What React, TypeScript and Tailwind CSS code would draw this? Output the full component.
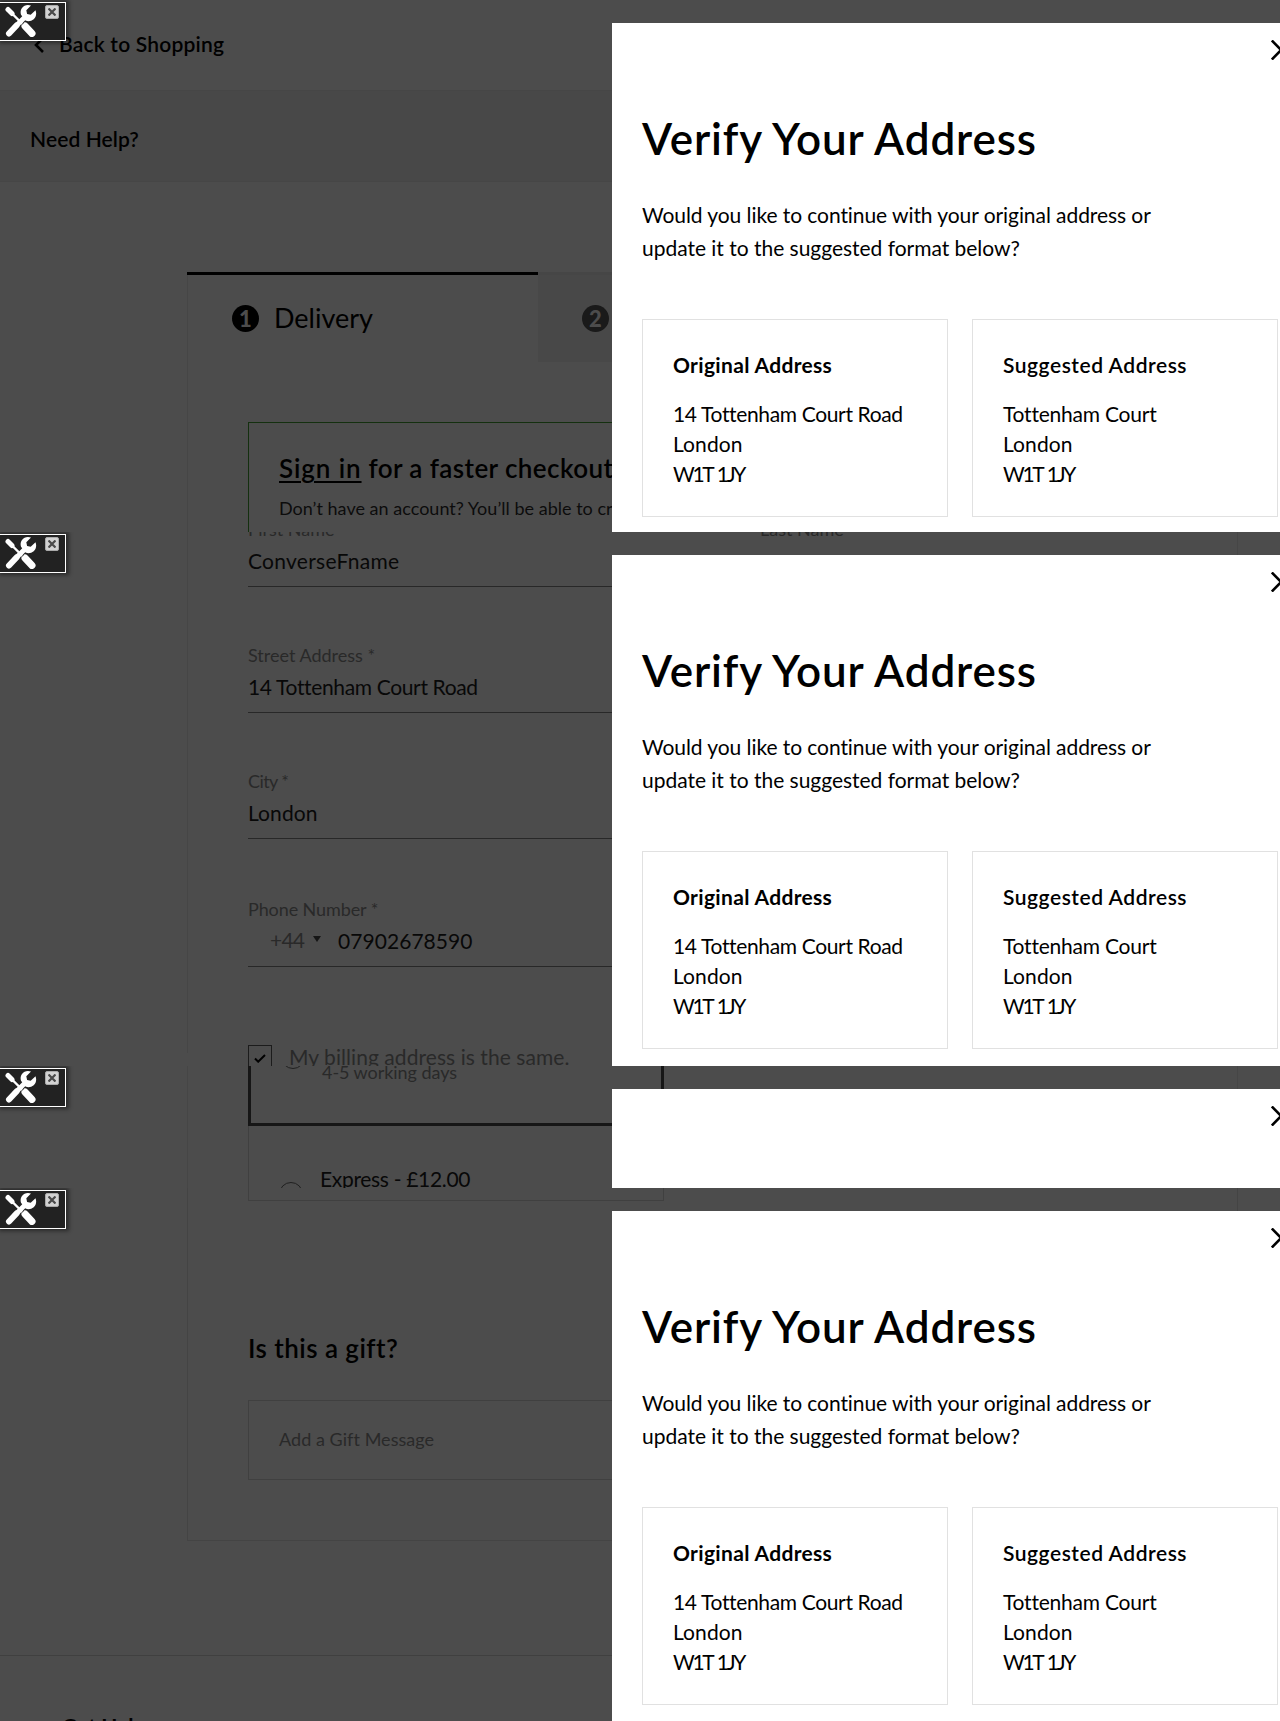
import type { ReactNode } from "react";

function ToolsIcon() {
  return (
    <svg viewBox="0 0 32 32" className="size-8" fill="none" stroke="#fff">
      <path d="M11.5 20.5 4 28.5" strokeWidth="6" strokeLinecap="round" />
      <path d="M19.5 12.5 9 23" strokeWidth="5" />
      <path
        d="M30.5 5.2l-4.8 4.6-3.6-.9-.8-3.6L26 .6C22.5-.6 18.9.3 17 3c-1.5 2.1-1.7 4.5-1 6.8L20.5 15.5c2.6 1.2 5.8.7 8.2-1.2 2.5-2.3 3.1-6 1.8-9.1z"
        fill="#fff"
        stroke="none"
      />
      <path d="M3 4.5l4 4" strokeWidth="5" strokeLinecap="round" />
      <path d="M7 8.5l11.5 11.5" strokeWidth="2.4" />
      <path d="M20 21l7 7.5" strokeWidth="7" strokeLinecap="round" />
      <path d="M16.5 19.8l2.6-2.4" stroke="#222" strokeWidth="1" />
    </svg>
  );
}

function ToolBadge() {
  return (
    <div className="absolute left-0 top-0.5 z-20 flex h-[39px] w-[66px] items-start border-y border-r border-white bg-[#222] pl-[5px] pt-[2px] shadow-[1px_0_4px_2px_rgba(0,0,0,0.45)]">
      <ToolsIcon />
      <div className="ml-2 flex size-[14px] items-center justify-center rounded-[2px] border border-[#aaa] bg-[#d2d2d2]">
        <svg viewBox="0 0 8 8" className="size-2" stroke="#4a4a4a" strokeWidth="2.2">
          <path d="M0.5 0.5l7 7M7.5 0.5l-7 7" />
        </svg>
      </div>
    </div>
  );
}

function AddressCard({ title, lines }: { title: ReactNode; lines: ReactNode }) {
  return (
    <div className="h-[198px] w-[306px] shrink-0 border border-[#e1e1e1] pl-[30px] pt-[33px]">
      <h3>{title}</h3>
      <div className="mt-[22px] leading-[30px]">{lines}</div>
    </div>
  );
}

function VerifyModal() {
  return (
    <div className="absolute bottom-0 right-0 top-[23px] z-10 w-[668px] overflow-hidden bg-white pl-[30px] text-[21px] leading-6 text-black">
      <svg
        viewBox="0 0 20 20"
        className="absolute -right-[11px] top-[17px] size-5"
        stroke="#000"
        strokeWidth="2.6"
      >
        <path d="M0.8 0.5l18.4 19M19.2 0.5l-18.4 19" />
      </svg>
      <h2 className="mt-[89px] text-[44px] font-semibold leading-[52px] tracking-[0.87px]">Verify Your Address</h2>
      <p className="mt-[34px] whitespace-nowrap leading-[33px]">
        <span className="tracking-[-0.07px]">Would you like to continue with your original address or</span>
        <br />
        <span className="tracking-[-0.02px]">update it to the suggested format below?</span>
      </p>
      <div className="mt-[55px] flex gap-6">
        <AddressCard
          title={<span className="font-bold tracking-[0.33px]">Original Address</span>}
          lines={
            <>
              <p className="tracking-[-0.35px]">14 Tottenham Court Road</p>
              <p className="tracking-[0.1px]">London</p>
              <p className="tracking-[-2.3px] [word-spacing:2px]">W1T 1JY</p>
            </>
          }
        />
        <AddressCard
          title={<span className="font-semibold tracking-[0.53px]">Suggested Address</span>}
          lines={
            <>
              <p className="tracking-[-0.22px]">Tottenham Court</p>
              <p className="tracking-[0.1px]">London</p>
              <p className="tracking-[-2.3px] [word-spacing:2px]">W1T 1JY</p>
            </>
          }
        />
      </div>
    </div>
  );
}

function Slice({ className, children }: { className: string; children: ReactNode }) {
  return (
    <section className={`relative overflow-hidden bg-[#4c4c4c] ${className}`}>
      <ToolBadge />
      {children}
      <VerifyModal />
    </section>
  );
}

function Field({ label, children }: { label: ReactNode; children: ReactNode }) {
  return (
    <div className="border-b border-[#282828] pb-[13px]">
      <div className="text-[18px] leading-5 text-[#292929]">{label}</div>
      <div className="mt-[10px] flex h-6 text-[#080808]">{children}</div>
    </div>
  );
}

function StepNumber({ className, children }: { className: string; children: ReactNode }) {
  return (
    <span
      className={`flex size-[27px] items-center justify-center rounded-full text-[22px] font-black leading-none text-[#4c4c4c] ${className}`}
    >
      {children}
    </span>
  );
}

function TopSlice() {
  return (
    <Slice className="h-[532px]">
      <header className="flex h-[91px] items-start border-b border-[#464646] pl-[34px] pt-8">
        <svg viewBox="0 0 10 16" className="mt-[5px] h-4 w-2.5" fill="none" stroke="#000" strokeWidth="2.6">
          <path d="M9 1 2 8l7 7" />
        </svg>
        <span className="ml-[15px] font-semibold tracking-[0.2px]">Back to Shopping</span>
      </header>
      <div className="h-[91px] border-b border-[#464646] bg-[#484848] pl-[30px] pt-9">
        <span className="font-semibold tracking-[0.1px]">Need Help?</span>
      </div>
      <main className="ml-[187px] mt-[90px] h-[260px] w-[1051px] border-x border-[#464646]">
        <div className="-ml-px flex">
          <div className="flex h-[90px] w-[351px] items-center gap-[15px] border-t-[3px] border-black pl-[45px]">
            <StepNumber className="bg-black">1</StepNumber>
            <span className="-mt-0.5 text-[27px] leading-8">Delivery</span>
          </div>
          <div className="flex h-[90px] flex-1 items-center border-t-[3px] border-[#464646] bg-[#484848] pl-11">
            <StepNumber className="bg-[#1a1a1a]">2</StepNumber>
          </div>
        </div>
        <div className="ml-[60px] mt-[60px] h-[140px] w-[928px] border border-[#14300f] pl-[30px] pt-[29px]">
          <h2 className="whitespace-nowrap text-[26px] font-semibold leading-8 tracking-[0.42px]">
            <span className="tracking-[0.9px] underline decoration-2 underline-offset-[3px]">Sign in</span> for a
            faster checkout
          </h2>
          <p className="mt-[14px] whitespace-nowrap text-[18px] leading-5 tracking-[0.02px] text-[#0c0c0c]">
            Don’t have an account? You’ll be able to create one
          </p>
        </div>
      </main>
    </Slice>
  );
}

function FormSlice() {
  return (
    <Slice className="h-[534px]">
      <div className="ml-[187px] h-[534px] w-[1051px] border-x border-[#464646] pl-[60px]">
        <div className="-mt-[13px] w-[928px]">
          <div className="grid grid-cols-2 gap-x-24">
            <Field label="First Name">
              <span className="tracking-[0.27px]">ConverseFname</span>
            </Field>
            <Field label="Last Name">
              <span className="text-[20px]">LNU</span>
            </Field>
          </div>
          <div className="mt-[58px]">
            <Field label="Street Address *">
              <span className="tracking-[-0.35px]">14 Tottenham Court Road</span>
            </Field>
          </div>
          <div className="mt-[58px]">
            <Field label={<span className="tracking-[-0.6px]">City *</span>}>
              <span className="tracking-[0.1px]">London</span>
            </Field>
          </div>
          <div className="mt-[60px]">
            <Field label={<span className="tracking-[-0.1px]">Phone Number *</span>}>
              <span className="-mt-px ml-[22px] w-[33px] tracking-[-0.8px] text-[#292929]">+44</span>
              <svg viewBox="0 0 8 6" className="ml-[10px] mt-[7px] h-1.5 w-2" fill="#161616">
                <path d="M0 0h8L4 6z" />
              </svg>
              <span className="ml-[17px] tracking-[0.05px]">07902678590</span>
            </Field>
          </div>
          <label className="mt-[78px] flex gap-4">
            <span className="flex h-[27px] w-6 justify-center border border-[#1c1c1c] pt-[8px]">
              <svg viewBox="0 0 12 9" className="h-[9px] w-3" fill="none" stroke="#000" strokeWidth="2">
                <path d="M1 4.5l3.2 3.2L11 1" />
              </svg>
            </span>
            <span className="ml-px tracking-[0.06px] text-[#292929]">My billing address is the same.</span>
          </label>
        </div>
      </div>
    </Slice>
  );
}

function ShippingSlice() {
  return (
    <Slice className="h-[122px]">
      <div className="ml-[187px] h-[122px] w-[1051px] border-x border-[#464646] pl-[60px]">
        <div className="flex h-[60px] w-[416px] border-x-[3px] border-b-[3px] border-[#161616] pl-[30px]">
          <span className="-mt-[21px] size-6 rounded-full border border-[#202020]" />
          <span className="-mt-1 ml-[17px] text-[18px] leading-5 tracking-[-0.05px] text-[#292929]">
            4-5 working days
          </span>
        </div>
        <div className="flex h-[62px] w-[416px] border-x border-[#404040] pl-[30px]">
          <span className="mt-14 size-6 rounded-full border border-[#202020]" />
          <span className="ml-[17px] mt-[41px] tracking-[-0.32px] text-[#080808]">Express - £12.00</span>
        </div>
      </div>
    </Slice>
  );
}

function GiftSlice() {
  return (
    <Slice className="h-[533px]">
      <div className="ml-[187px] w-[1051px] border-x border-b border-[#444] pb-[60px] pl-[60px]">
        <div className="h-[13px] w-[416px] border-x border-b border-[#404040]" />
        <h2 className="mt-[131px] text-[26px] font-semibold leading-8 tracking-[0.45px]">Is this a gift?</h2>
        <div className="mt-9 flex h-20 w-[928px] items-center border border-[#404040] pb-0.5 pl-[30px] text-[18px] leading-5 tracking-[0.05px] text-[#292929]">
          Add a Gift Message
        </div>
      </div>
      <footer className="mt-[114px] border-t border-[#404040] pl-[62px] pt-[58px]">
        <span className="font-bold">Get Help</span>
      </footer>
    </Slice>
  );
}

export default function App() {
  return (
    <div className="w-[1280px] font-['Lato',sans-serif] text-[21px] leading-6 text-black">
      <TopSlice />
      <FormSlice />
      <ShippingSlice />
      <GiftSlice />
    </div>
  );
}
